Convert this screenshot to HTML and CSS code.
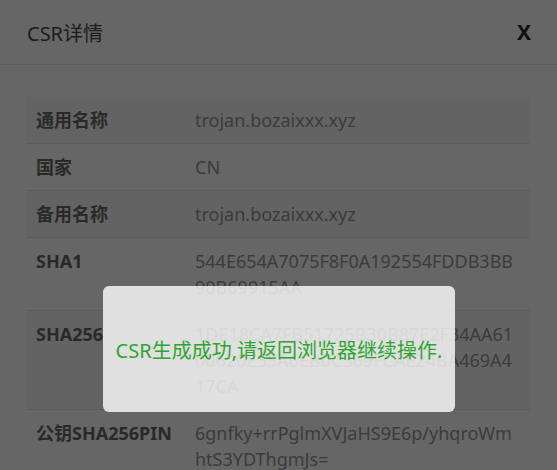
FILE: index.html
```html
<!DOCTYPE html>
<html lang="zh-CN">
<head>
    <meta charset="UTF-8">
    <meta name="viewport" content="width=device-width, initial-scale=1.0">
    <title>CSR详情</title>
    <link rel="stylesheet" href="styles.css">
</head>
<body>
    <!-- CSR detail panel -->
    <div class="panel">
        <div class="panel-head">
            <span class="panel-title">CSR详情</span>
            <span class="panel-close">X</span>
        </div>
        <div class="panel-body">
            <table class="csr-table">
                <tr>
                    <td class="csr-key">通用名称</td>
                    <td class="csr-val">trojan.bozaixxx.xyz</td>
                </tr>
                <tr>
                    <td class="csr-key">国家</td>
                    <td class="csr-val">CN</td>
                </tr>
                <tr>
                    <td class="csr-key">备用名称</td>
                    <td class="csr-val">trojan.bozaixxx.xyz</td>
                </tr>
                <tr>
                    <td class="csr-key">SHA1</td>
                    <td class="csr-val">544E654A7075F8F0A192554FDDB3BB90B69915AA</td>
                </tr>
                <tr>
                    <td class="csr-key">SHA256</td>
                    <td class="csr-val">1DE18CA7FB51725B30B87E2F34AA6100620E55A6EB0C569FCAE24BA469A417CA</td>
                </tr>
                <tr>
                    <td class="csr-key">公钥SHA256PIN</td>
                    <td class="csr-val">6gnfky+rrPglmXVJaHS9E6p/yhqroWmhtS3YDThgmJs=</td>
                </tr>
            </table>
        </div>
    </div>

    <!-- Toast message -->
    <div class="toast">CSR生成成功,请返回浏览器继续操作.</div>
</body>
</html>
```

FILE: styles.css
```css
body {
    margin: 0;
    padding: 0;
    background-color: #666666;
    font-family: "Noto Sans", "Noto Sans CJK SC", sans-serif;
    position: relative;
    min-height: 470px;
}
.panel-head {
    height: 64px;
    display: flex;
    align-items: center;
    justify-content: space-between;
    padding: 0 26px 0 27px;
    border-bottom: 1px solid #5a5a5a;
}
.panel-title {
    font-size: 20px;
    color: #1c1c1c;
}
.panel-close {
    font-size: 21px;
    font-weight: bold;
    color: #111111;
}
.panel-body {
    padding: 32px 27px;
}
.csr-table {
    width: 100%;
    border-collapse: collapse;
}
.csr-table tr {
    border-bottom: 1px solid #5b5b5b;
}
.csr-table tr:nth-child(odd) {
    background-color: #636363;
}
.csr-table td {
    vertical-align: top;
    padding: 10px 9px;
    line-height: 26px;
}
.csr-key {
    width: 141px;
    font-size: 18px;
    font-weight: bold;
    color: #292929;
}
.csr-val {
    font-size: 18px;
    color: #3b3b3b;
    word-break: break-all;
    padding-right: 15px !important;
}
/* Toast */
.toast {
    position: absolute;
    top: 286px;
    left: 103px;
    width: 352px;
    height: 126px;
    display: flex;
    align-items: center;
    justify-content: center;
    background-color: rgba(255, 255, 255, 0.8);
    border-radius: 6px;
    color: #2ea52e;
    font-size: 20px;
}
```
